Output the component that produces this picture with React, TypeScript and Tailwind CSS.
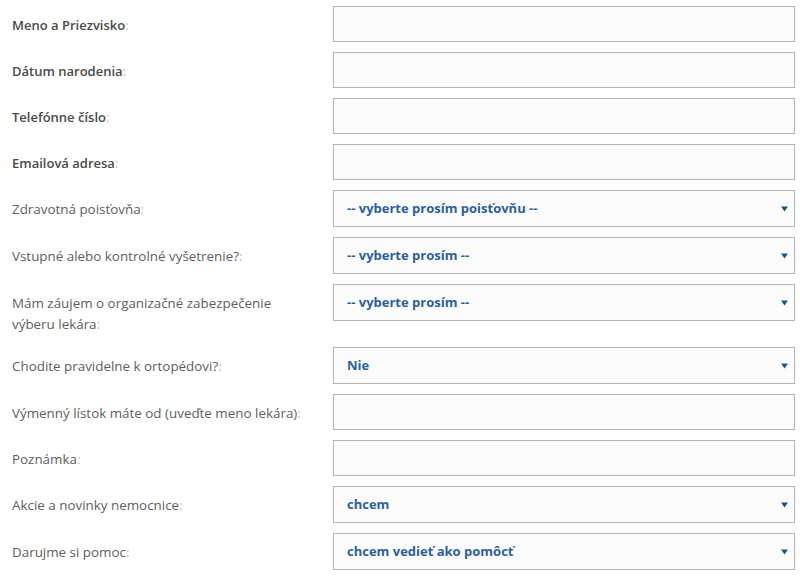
import React from 'react';

type Field =
  | { label: string; kind: 'input'; strong?: boolean }
  | { label: string; kind: 'select'; value: string };

const fields: Field[] = [
  { label: 'Meno a Priezvisko', kind: 'input', strong: true },
  { label: 'Dátum narodenia', kind: 'input', strong: true },
  { label: 'Telefónne číslo', kind: 'input', strong: true },
  { label: 'Emailová adresa', kind: 'input', strong: true },
  { label: 'Zdravotná poisťovňa', kind: 'select', value: '-- vyberte prosím poisťovňu --' },
  { label: 'Vstupné alebo kontrolné vyšetrenie?', kind: 'select', value: '-- vyberte prosím --' },
  { label: 'Mám záujem o organizačné zabezpečenie výberu lekára', kind: 'select', value: '-- vyberte prosím --' },
  { label: 'Chodite pravidelne k ortopédovi?', kind: 'select', value: 'Nie' },
  { label: 'Výmenný lístok máte od (uveďte meno lekára)', kind: 'input' },
  { label: 'Poznámka', kind: 'input' },
  { label: 'Akcie a novinky nemocnice', kind: 'select', value: 'chcem' },
  { label: 'Darujme si pomoc', kind: 'select', value: 'chcem vedieť ako pomôcť' },
];

function Arrow() {
  return (
    <svg width="7" height="6" viewBox="0 0 7 6" className="shrink-0">
      <path d="M0 0.5 L7 0.5 L3.5 5.5 Z" fill="#1f5186" />
    </svg>
  );
}

export default function App() {
  return (
    <div
      className="w-[800px] min-h-[578px] bg-white pt-[6px] pl-3 pr-[5px] text-[13px]"
      style={{ fontFamily: '"Open Sans", "Liberation Sans", sans-serif' }}
    >
      {fields.map((f) => {
        const strong = f.kind === 'input' && f.strong;
        return (
          <div key={f.label} className="flex items-start mb-[10px]">
            {/* popis poľa */}
            <label
              className={`w-[321px] shrink-0 pt-[9px] pb-[2px] pr-[24px] leading-[21px] ${
                strong ? 'font-semibold text-[#4a4a4a]' : 'font-normal text-[13.4px] text-[#606060]'
              }`}
            >
              {f.label}
              <span className="text-[#bbb] font-normal">:</span>
            </label>

            {f.kind === 'input' ? (
              <input
                type="text"
                className="flex-1 h-9 border border-[#b4b4b4] bg-[#fcfcfc] outline-none px-3"
              />
            ) : (
              <div className="flex-1 h-[37px] border border-[#b4b4b4] bg-[#fcfcfc] flex items-center justify-between pl-[13px] pr-[6px]">
                <span className="font-bold text-[#2c5f9b]">{f.value}</span>
                <Arrow />
              </div>
            )}
          </div>
        );
      })}
    </div>
  );
}
